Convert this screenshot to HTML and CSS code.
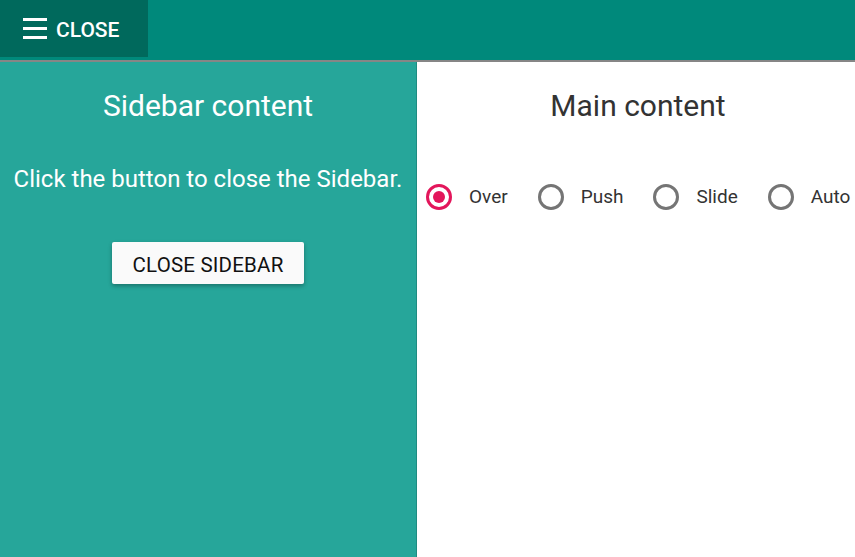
FILE: index.html
```html
<!DOCTYPE html>
<html lang="en">
<head>
<meta charset="utf-8">
<title>Sidebar</title>
<link rel="stylesheet" href="styles.css">
</head>
<body>
<header class="toolbar">
  <button class="menu-btn" type="button">
    <svg class="menu-icon" width="24" height="21" viewBox="0 0 24 21" aria-hidden="true">
      <rect x="0" y="0" width="24" height="3" fill="#fff"/>
      <rect x="0" y="9" width="24" height="3" fill="#fff"/>
      <rect x="0" y="18" width="24" height="3" fill="#fff"/>
    </svg>
    <span>CLOSE</span>
  </button>
</header>
<div class="layout">
  <aside class="sidebar">
    <h2 class="title">Sidebar content</h2>
    <p class="desc">Click the button to close the Sidebar.</p>
    <button class="close-sidebar" type="button">CLOSE SIDEBAR</button>
  </aside>
  <main class="main">
    <h2 class="title main-title">Main content</h2>
    <div class="radios">
      <label class="radio checked"><span class="ring"></span><span class="lbl">Over</span></label>
      <label class="radio"><span class="ring"></span><span class="lbl">Push</span></label>
      <label class="radio"><span class="ring"></span><span class="lbl">Slide</span></label>
      <label class="radio"><span class="ring"></span><span class="lbl">Auto</span></label>
    </div>
  </main>
</div>
</body>
</html>
```
FILE: styles.css
```css
* { box-sizing: border-box; }
html, body { margin: 0; padding: 0; }
body {
  font-family: Roboto, "Liberation Sans", sans-serif;
  height: 100vh;
  display: flex;
  flex-direction: column;
  overflow: hidden;
  background: #fff;
}
.toolbar {
  height: 62px;
  flex: none;
  background: #00897b;
  border-bottom: 2px solid #868686;
  display: flex;
  align-items: flex-start;
}
.menu-btn {
  height: 57px;
  width: 148px;
  border: none;
  margin: 0;
  background: #00695c;
  color: #fff;
  display: flex;
  align-items: center;
  padding: 2px 0 0 23px;
  gap: 9px;
  font-family: Roboto, "Liberation Sans", sans-serif;
  font-size: 21px;
  font-weight: 500;
  cursor: pointer;
}
.menu-icon { display: block; margin-top: -2px; }
.layout {
  flex: 1;
  display: flex;
  min-height: 0;
}
.sidebar {
  width: 417px;
  flex: none;
  background: #26a69a;
  border-right: 1px solid #1e8c82;
  color: #fff;
  display: flex;
  flex-direction: column;
  align-items: center;
  text-align: center;
}
.title {
  margin: 26px 0 0;
  font-size: 30px;
  font-weight: 400;
  line-height: 36px;
}
.desc {
  margin: 41px 0 0;
  font-size: 24px;
  line-height: 28px;
  white-space: nowrap;
}
.close-sidebar {
  margin-top: 49px;
  height: 42px;
  width: 192px;
  border: none;
  border-radius: 2px;
  padding: 3px 0 0;
  background: #fafafa;
  color: #111;
  font-family: Roboto, "Liberation Sans", sans-serif;
  font-size: 20.5px;
  font-weight: 400;
  letter-spacing: 0.2px;
  box-shadow: 0 2px 4px rgba(0,0,0,0.3);
  cursor: pointer;
}
.main {
  flex: none;
  width: 442px;
  color: #333;
}
.main-title {
  text-align: center;
  color: #333;
}
.radios {
  margin-top: 60px;
  padding-left: 9px;
  display: flex;
  align-items: center;
  gap: 30px;
}
.radio {
  display: flex;
  align-items: center;
  gap: 17px;
  font-size: 19px;
  color: #333;
  white-space: nowrap;
}
.ring {
  width: 26px;
  height: 26px;
  border: 3px solid #757575;
  border-radius: 50%;
  display: flex;
  align-items: center;
  justify-content: center;
}
.checked .ring { border-color: #e3165b; }
.checked .ring::after {
  content: "";
  width: 12px;
  height: 12px;
  border-radius: 50%;
  background: #e3165b;
}
.lbl { line-height: 26px; }
```
